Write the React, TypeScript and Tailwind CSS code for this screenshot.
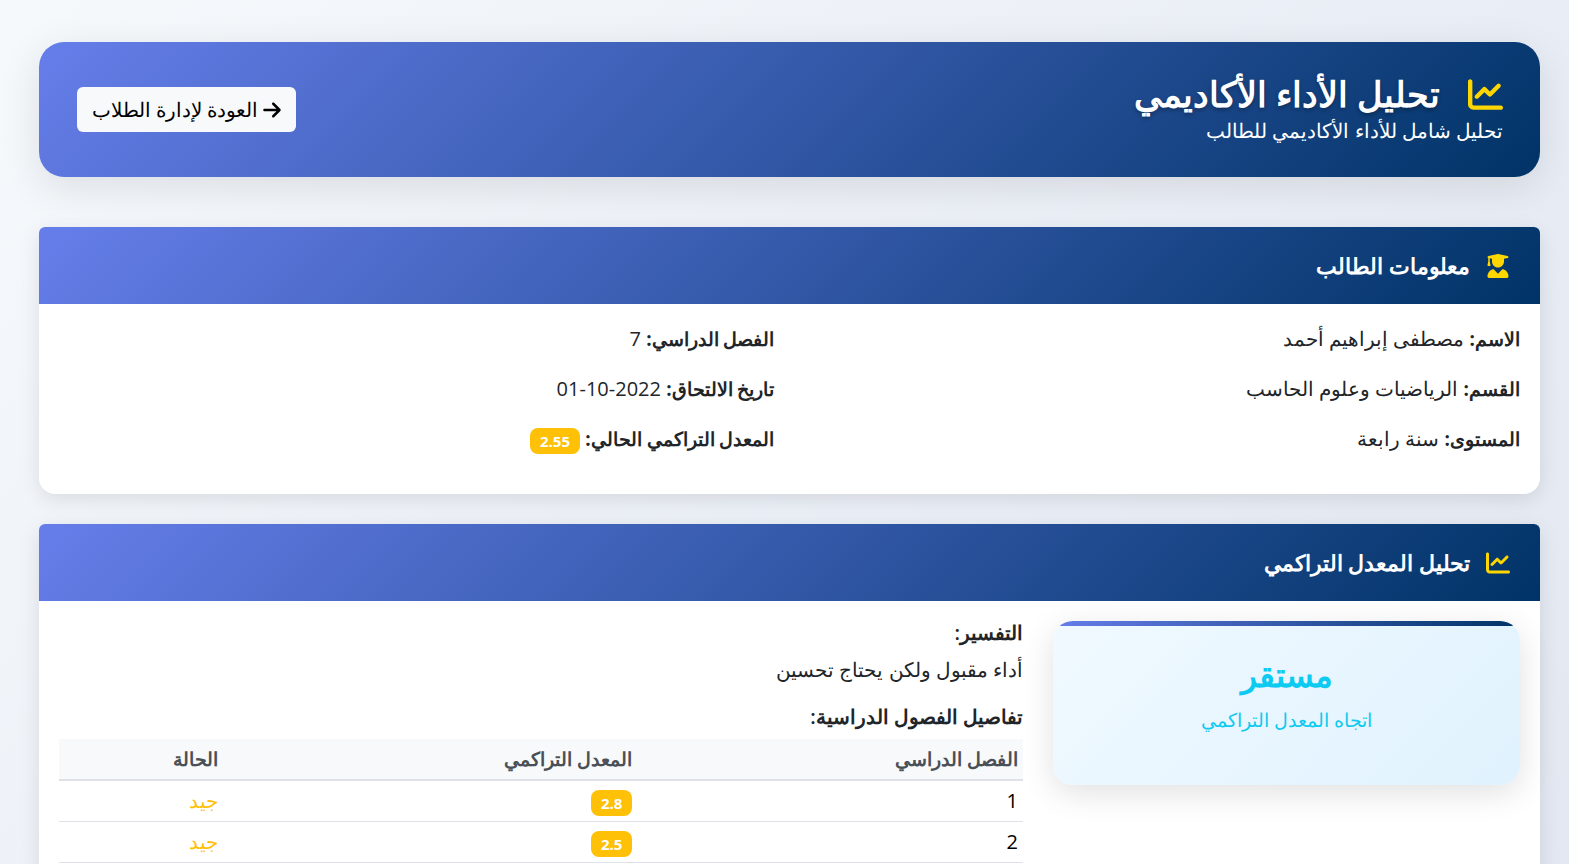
import type { ReactNode } from "react";
import { FaArrowRight, FaChartLine, FaUserGraduate } from "react-icons/fa6";

type Semester = { term: string; gpa: string; status: string };

const semesters: Semester[] = [
  { term: "1", gpa: "2.8", status: "جيد" },
  { term: "2", gpa: "2.5", status: "جيد" },
];

function Badge({ children }: { children: ReactNode }) {
  return (
    <span className="inline-block rounded-lg bg-[#ffc107] px-2.5 py-[5px] align-middle text-[15px] leading-4 font-bold text-white">
      {children}
    </span>
  );
}

function Field({ label, children }: { label: string; children: ReactNode }) {
  return (
    <p className="mb-5 leading-[30px]">
      <strong className="text-[19px] font-bold">{label}</strong> {children}
    </p>
  );
}

function Card({ icon, title, children }: { icon: ReactNode; title: string; children: ReactNode }) {
  return (
    <section className="mb-[30px] rounded-md rounded-b-2xl bg-white shadow-[0_5px_20px_rgba(0,0,0,0.1)]">
      <header className="rounded-t-md bg-[linear-gradient(135deg,#667eea_0%,#003366_100%)] px-[30px] py-6">
        <h2 className="flex items-center gap-4 text-[22px] leading-[29px] font-bold text-white">
          <span className="text-2xl text-[#ffd700]">{icon}</span>
          {title}
        </h2>
      </header>
      <div className="p-5">{children}</div>
    </section>
  );
}

export default function App() {
  return (
    <div
      dir="rtl"
      lang="ar"
      className="flow-root min-h-screen bg-[linear-gradient(135deg,#f6f9fc_0%,#ebeff6_50%,#e2e7f1_100%)] font-['Open_Sans',sans-serif] text-xl text-[#212529]"
    >
      <main className="pt-[42px] pr-[29px] pl-[39px]">
        <header className="mb-[50px] flex items-center justify-between rounded-[25px] bg-[linear-gradient(135deg,#667eea_0%,#003366_100%)] py-[31px] pr-[37px] pl-[38px] text-white shadow-[0_10px_40px_rgba(0,0,0,0.1)]">
          <div>
            <h1 className="flex items-center gap-7 text-[35px] leading-[42px] font-bold [text-shadow:0_2px_4px_rgba(0,0,0,0.3)]">
              <FaChartLine className="text-[#ffd700]" aria-hidden="true" />
              تحليل الأداء الأكاديمي
            </h1>
            <p className="leading-[31px]">تحليل شامل للأداء الأكاديمي للطالب</p>
          </div>
          <a href="#students" className="flex items-center gap-[5px] rounded-md bg-[#f8f9fa] px-[15px] py-2 leading-[29px] text-black">
            <FaArrowRight className="h-5 w-[18px]" aria-hidden="true" />
            العودة لإدارة الطلاب
          </a>
        </header>

        <Card icon={<FaUserGraduate aria-hidden="true" />} title="معلومات الطالب">
          <div className="grid grid-cols-2 gap-x-[30px]">
            <div>
              <Field label="الاسم:">مصطفى إبراهيم أحمد</Field>
              <Field label="القسم:">الرياضيات وعلوم الحاسب</Field>
              <Field label="المستوى:">سنة رابعة</Field>
            </div>
            <div>
              <Field label="الفصل الدراسي:">7</Field>
              <Field label="تاريخ الالتحاق:">
                <bdi dir="ltr">01-10-2022</bdi>
              </Field>
              <Field label="المعدل التراكمي الحالي:">
                <Badge>2.55</Badge>
              </Field>
            </div>
          </div>
        </Card>

        <Card icon={<FaChartLine aria-hidden="true" />} title="تحليل المعدل التراكمي">
          <div className="-mx-[15px] flex items-start">
            <div className="w-1/3 px-[15px]">
              <div className="overflow-hidden rounded-[20px] bg-[linear-gradient(135deg,#f0f9ff_0%,#e0f2fe_100%)] text-center text-[#0dcaf0] shadow-[0_8px_32px_rgba(0,0,0,0.12)]">
                <div className="h-[5px] bg-[linear-gradient(135deg,#667eea_0%,#003366_100%)]" />
                <div className="pt-7 pb-[50px]">
                  <h3 className="mb-[9px] text-[33px] leading-[42px] font-bold">مستقر</h3>
                  <p className="text-[19px] leading-[30px]">اتجاه المعدل التراكمي</p>
                </div>
              </div>
            </div>
            <div className="w-2/3 px-[15px]">
              <h3 className="mb-2.5 text-xl leading-6 font-semibold">التفسير:</h3>
              <p className="mb-5 leading-[30px]">أداء مقبول ولكن يحتاج تحسين</p>
              <h3 className="mb-2.5 text-xl leading-6 font-semibold">تفاصيل الفصول الدراسية:</h3>
              <table className="w-full table-fixed border-collapse text-right leading-[30px]">
                <thead>
                  <tr className="border-b-2 border-[#dee2e6] bg-[#f8f9fa] text-[19px] text-[#495057]">
                    <th className="p-[5px] font-semibold">الفصل الدراسي</th>
                    <th className="w-[43%] p-[5px] font-semibold">المعدل التراكمي</th>
                    <th className="w-[17%] p-[5px] font-semibold">الحالة</th>
                  </tr>
                </thead>
                <tbody>
                  {semesters.map((s) => (
                    <tr key={s.term} className="border-b border-[#dee2e6]">
                      <td className="p-[5px] text-black">{s.term}</td>
                      <td className="p-[5px]">
                        <Badge>{s.gpa}</Badge>
                      </td>
                      <td className="p-[5px] text-[#ffc107]">{s.status}</td>
                    </tr>
                  ))}
                </tbody>
              </table>
            </div>
          </div>
        </Card>
      </main>
    </div>
  );
}
